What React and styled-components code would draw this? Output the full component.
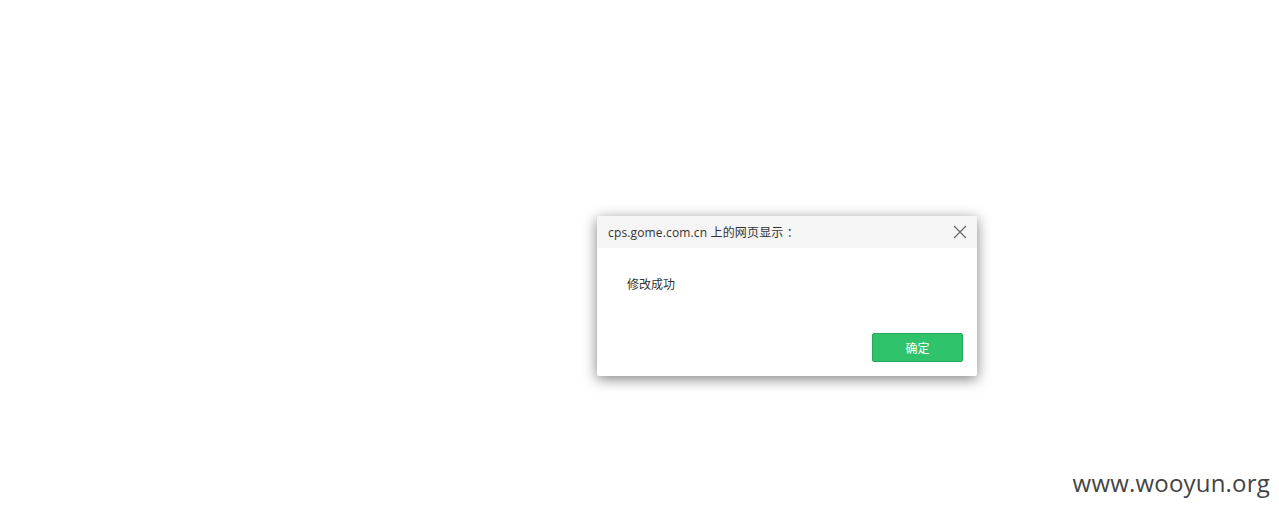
import React from "react";
import styled, { createGlobalStyle } from "styled-components";

const Global = createGlobalStyle`
  html, body { margin: 0; padding: 0; background: #fff; }
  body { font-family: "Open Sans", "Noto Sans CJK SC", sans-serif; }
`;

const Page = styled.div`
  position: relative;
  width: 1279px;
  height: 515px;
  overflow: hidden;
  background: #fff;
  padding: 216px 0 0 597px;
  box-sizing: border-box;
`;

const Dialog = styled.div`
  width: 380px;
  height: 160px;
  background: #fff;
  border-radius: 2px;
  box-shadow: 0 3px 14px rgba(0, 0, 0, 0.5);
  display: flex;
  flex-direction: column;
`;

const Header = styled.div`
  height: 32px;
  background: #f5f5f5;
  display: flex;
  align-items: center;
  justify-content: space-between;
  padding: 0 8px 0 11px;
  border-radius: 2px 2px 0 0;
`;

const Title = styled.div`
  font-size: 12px;
  color: #333;
  letter-spacing: 0.15px;
`;

const Close = styled.button`
  width: 18px;
  height: 18px;
  padding: 0;
  border: none;
  background: none;
  display: flex;
  align-items: center;
  justify-content: center;
`;

const Body = styled.div`
  flex: 1;
  padding: 27px 30px 0 30px;
  font-size: 12px;
  color: #333;
`;

const Footer = styled.div`
  display: flex;
  justify-content: flex-end;
  padding: 0 14px 14px 0;
`;

const OkButton = styled.button`
  width: 91px;
  height: 29px;
  background: #2fc46c;
  border: 1px solid #27a85b;
  border-radius: 2px;
  color: #fff;
  font-family: "Noto Sans CJK SC", sans-serif;
  font-size: 12px;
  padding: 0;
`;

const Watermark = styled.div`
  position: absolute;
  right: 9px;
  bottom: 16px;
  font-family: "Open Sans", sans-serif;
  font-size: 24px;
  color: #444;
  letter-spacing: 0.2px;
`;

export default function App() {
  return (
    <>
      <Global />
      <Page>
        <Dialog>
          <Header>
            <Title>cps.gome.com.cn 上的网页显示 ：</Title>
            <Close aria-label="close">
              <svg width="14" height="14" viewBox="0 0 14 14">
                <path d="M1 1 L13 13 M13 1 L1 13" stroke="#666" strokeWidth="1.1" fill="none" />
              </svg>
            </Close>
          </Header>
          <Body>修改成功</Body>
          <Footer>
            <OkButton>确定</OkButton>
          </Footer>
        </Dialog>
        <Watermark>www.wooyun.org</Watermark>
      </Page>
    </>
  );
}
